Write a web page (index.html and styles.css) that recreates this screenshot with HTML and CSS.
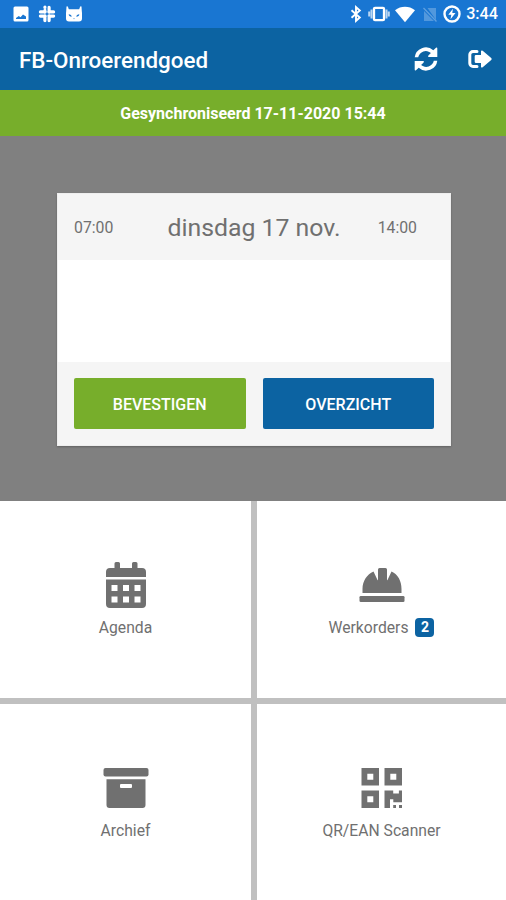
FILE: index.html
```html
<!DOCTYPE html>
<html lang="nl">
<head>
    <meta charset="UTF-8">
    <meta name="viewport" content="width=device-width, initial-scale=1.0">
    <title>FB-Onroerendgoed</title>
    <link rel="stylesheet" href="styles.css">
</head>
<body>
    <div class="statusbar">
        <div class="status-left">
            <svg width="16" height="16" viewBox="0 0 16 16" fill="currentColor"><path fill-rule="evenodd" d="M2 0.500h12a1.500 1.500 0 0 1 1.500 1.500v12a1.500 1.500 0 0 1-1.500 1.500H2a1.500 1.500 0 0 1-1.500-1.500V2A1.500 1.500 0 0 1 2 .5zM3 13h10v-2.500L10 8.500l-2.500 2.700L5.800 10 3 12z"/></svg>
            <svg width="18" height="18" viewBox="0 0 18 18" fill="none" stroke="currentColor" stroke-width="3.400" stroke-linecap="round"><path d="M7 5.500V7M7 2.300v.1M2.500 7H7M11 2.500V7M12.500 7h3M2.500 11h3M7 11v4.500M11 11h4.500M11 12.500v3"/><path d="M9 0v6M9 12v6M0 9h6M12 9h6" stroke="#1976d2" stroke-width=".7" stroke-linecap="butt"/><circle cx="9" cy="9" r=".6" fill="#1976d2" stroke="none"/></svg>
            <svg width="18" height="18" viewBox="0 0 18 18" fill="currentColor"><path fill-rule="evenodd" d="M1.500 1.500Q2.500.7 3 2l.8 2.200h10.400L15 2q.5-1.300 1.500-.5l.3 4.500.2 2v5.500Q17 16.500 14 16.500H4q-3 0-3-3V8l.2-2zM3.700 9.300c0 1.600 1.100 2.400 3 2.400-.1-1.400-1.200-2.300-3-2.400zM14.300 9.300c0 1.600-1.100 2.400-3 2.400.1-1.400 1.200-2.300 3-2.400zM8 13.500l1 .8 1-.8z"/></svg>
        </div>
        <div class="status-right">
            <svg width="12" height="18" viewBox="0 0 12 18" fill="none" stroke="currentColor" stroke-width="1.900"><path d="M1.500 5.200l8.300 7.300L6 15.800V2.200l3.800 3.300-8.300 7.300"/></svg>
            <svg class="vibrate" width="22" height="16" viewBox="0 0 22 16" fill="none" stroke="currentColor" stroke-width="2.300"><rect x="6" y="1.800" width="10" height="12.400" rx="1"/><path d="M3.500 3.500v9M1.200 5.500v5M18.500 3.500v9M20.800 5.500v5" stroke-width="2" opacity=".7"/></svg>
            <svg class="wifi" width="20" height="17" viewBox="0 0 20 17" fill="currentColor"><path d="M0 4.200C6-.4 14-.4 20 4.200L10 16.300z"/></svg>
            <svg class="nosim" width="14" height="15" viewBox="0 0 14 15"><path d="M4.500 1H13v12zM1 4v10h10z" fill="currentColor" opacity=".25"/><path d="M.5 1l13 13.500" stroke="currentColor" stroke-width="1.300" opacity=".3"/></svg>
            <svg class="battery" width="18" height="18" viewBox="0 0 18 18"><circle cx="9" cy="9" r="7.500" fill="none" stroke="currentColor" stroke-width="2.400"/><path d="M9.900 3.700L5.300 9.700h3l-.8 4.600 5-6.200H9.300z" fill="currentColor"/></svg>
            <span class="clock">3:44</span>
        </div>
    </div>

    <header class="header">
        <h1>FB-Onroerendgoed</h1>
        <div class="header-actions">
            <svg width="24" height="24" viewBox="0 0 24 24" fill="currentColor"><path d="M.7 10.300A11.200 11.200 0 0 1 19.300 3.300L22 .8q1.300-.7 1.300.8V10h-8.500q-1.300-.4-.4-1.500l2.500-2.500A7.800 7.800 0 0 0 4.200 10.300zM23.300 13.700A11.200 11.200 0 0 1 4.700 20.700L2 23.200q-1.300.7-1.300-.8V14h8.500q1.300.4.400 1.500L7.100 18A7.800 7.800 0 0 0 19.800 13.700z"/></svg>
            <svg width="24" height="20" viewBox="0 0 24 20" fill="currentColor"><path d="M9 2.500H5A3.200 3.200 0 0 0 1.800 5.700v8.600A3.200 3.200 0 0 0 5 17.500h4" fill="none" stroke="currentColor" stroke-width="3" stroke-linecap="round"/><path d="M13 2.300q.3-1.500 1.700-.5l8.500 7.300q.9.900 0 1.800l-8.500 7.300q-1.400 1-1.700-.5V14H8q-1.300 0-1.300-1.300V7.300Q6.700 6 8 6h5z"/></svg>
        </div>
    </header>

    <div class="sync">Gesynchroniseerd 17-11-2020 15:44</div>

    <section class="day">
        <div class="card">
            <div class="card-head">
                <span class="time">07:00</span>
                <span class="date">dinsdag 17 nov.</span>
                <span class="time">14:00</span>
            </div>
            <div class="card-body"></div>
            <div class="card-foot">
                <button class="btn btn-green">BEVESTIGEN</button>
                <button class="btn btn-blue">OVERZICHT</button>
            </div>
        </div>
    </section>

    <nav class="tiles">
        <a class="tile">
            <svg width="46" height="46" viewBox="0 0 46 46" fill="currentColor"><path d="M3 15v-5a4 4 0 0 1 4-4h4.500V1.500q0-1.500 1.500-1.500h2.500Q17 0 17 1.500V6h12V1.500Q29 0 30.500 0H33q1.500 0 1.500 1.500V6H39a4 4 0 0 1 4 4v5z"/><path fill-rule="evenodd" d="M3 17.500h40V42a4 4 0 0 1-4 4H7a4 4 0 0 1-4-4zM8.500 23v6h6v-6zM20 23v6h6v-6zM31.500 23v6h6v-6zM8.500 34.500v6h6v-6zM20 34.500v6h6v-6zM31.500 34.500v6h6v-6z"/></svg>
            <span>Agenda</span>
        </a>
        <a class="tile">
            <svg width="46" height="46" viewBox="0 0 46 46" fill="currentColor"><rect x=".5" y="34" width="45" height="6" rx="1.300"/><path d="M3.500 31v-4C3.500 19 8 12.300 14.500 9.500l4 8.500q.5.700.5-.5V7.500Q19 6 20.500 6h6Q28 6 28 7.500V17.500q0 1.200.5.500l4-8.500c6.500 2.800 10 9.500 10 17.500v4z"/></svg>
            <span>Werkorders <b class="badge">2</b></span>
        </a>
        <a class="tile">
            <svg width="46" height="46" viewBox="0 0 46 46" fill="currentColor"><rect x=".5" y="3" width="45" height="8.500" rx="2"/><path fill-rule="evenodd" d="M3.500 14.300h39V40a3 3 0 0 1-3 3h-33a3 3 0 0 1-3-3zM18 19q-1 0-1 1v2q0 1 1 1h10q1 0 1-1v-2q0-1-1-1z"/></svg>
            <span>Archief</span>
        </a>
        <a class="tile">
            <svg width="46" height="46" viewBox="0 0 46 46" fill="currentColor"><path fill-rule="evenodd" d="M2.500 3H20v17.500H2.500zM8.300 8.700v6h6v-6zM25.500 3H43v17.500H25.500zM31.300 8.700v6h6v-6zM2.500 25.500H20V43H2.500zM8.300 31.200v6h6v-6z"/><path d="M25.500 25.500h8.700v3h5.700v-3H43v11.700h-8.700v-3H31V43h-5.500zM34.200 40H37v3h-2.800zM40 40h3v3h-3z"/></svg>
            <span>QR/EAN Scanner</span>
        </a>
    </nav>
</body>
</html>
```

FILE: styles.css
```css
* {
    box-sizing: border-box;
}

body {
    margin: 0;
    height: 900px;
    display: flex;
    flex-direction: column;
    font-family: Roboto, "Liberation Sans", sans-serif;
    color: #707070;
    background: #fff;
    overflow: hidden;
}

svg {
    display: block;
    flex-shrink: 0;
}

/* Status bar */
.statusbar {
    height: 28px;
    padding: 0 8px 0 13px;
    display: flex;
    align-items: center;
    justify-content: space-between;
    background: #1976d2;
    color: #fff;
}

.status-left,
.status-right {
    display: flex;
    align-items: center;
}

.status-left {
    gap: 9px;
}

.vibrate {
    margin-left: 6px;
}

.wifi {
    margin-left: 5px;
}

.nosim {
    margin-left: 8px;
}

.battery {
    margin-left: 6px;
}

.clock {
    margin-left: 5px;
    font-size: 16.2px;
    font-weight: 500;
    line-height: 30px;
}

/* Header */
.header {
    height: 62px;
    padding: 0 14px 0 19px;
    display: flex;
    align-items: center;
    justify-content: space-between;
    background: #0c63a2;
    color: #fff;
}

.header h1 {
    margin: 0;
    padding-top: 1px;
    font-size: 22.4px;
    font-weight: 500;
}

.header-actions {
    display: flex;
    align-items: center;
    gap: 30px;
}

.sync {
    height: 46px;
    line-height: 47px;
    text-align: center;
    font-size: 16px;
    font-weight: 700;
    background: #77ae2b;
    color: #fff;
}

/* Day card */
.day {
    height: 365px;
    padding: 57px 55px 55px 57px;
    background: #808080;
}

.card {
    height: 253px;
    display: flex;
    flex-direction: column;
    background: #fff;
    border: 1px solid #eee;
    box-shadow: 0 1px 2px rgba(0, 0, 0, 0.25);
}

.card-head {
    height: 66px;
    padding: 1px 33px 0 16px;
    display: flex;
    align-items: center;
    justify-content: space-between;
    background: #f5f5f5;
}

.time {
    font-size: 15.8px;
}

.date {
    font-size: 24.8px;
    padding-left: 17px;
}

.card-body {
    flex: 1;
}

.card-foot {
    height: 83px;
    padding: 16px 16px 0 16px;
    display: flex;
    gap: 17px;
    background: #f5f5f5;
}

.btn {
    flex: 1;
    height: 51px;
    padding: 2px 0 0;
    border: none;
    border-radius: 2px;
    font-family: inherit;
    font-size: 16px;
    font-weight: 500;
    color: #fff;
}

.btn-green {
    background: #77ae2b;
}

.btn-blue {
    background: #0c63a2;
}

/* Tiles */
.tiles {
    flex: 1;
    display: grid;
    grid-template-columns: 251px 249px;
    grid-template-rows: 197px 196px;
    gap: 6px;
    background: #c0c0c0;
}

.tile {
    padding-top: 61px;
    display: flex;
    flex-direction: column;
    align-items: center;
    gap: 9px;
    background: #fff;
    font-size: 15.7px;
    line-height: 21px;
}

.tile span {
    display: flex;
    align-items: center;
    gap: 7px;
}

.badge {
    width: 19px;
    height: 19px;
    border-radius: 4px;
    background: #0c63a2;
    color: #fff;
    font-size: 14px;
    line-height: 19px;
    text-align: center;
}
```
